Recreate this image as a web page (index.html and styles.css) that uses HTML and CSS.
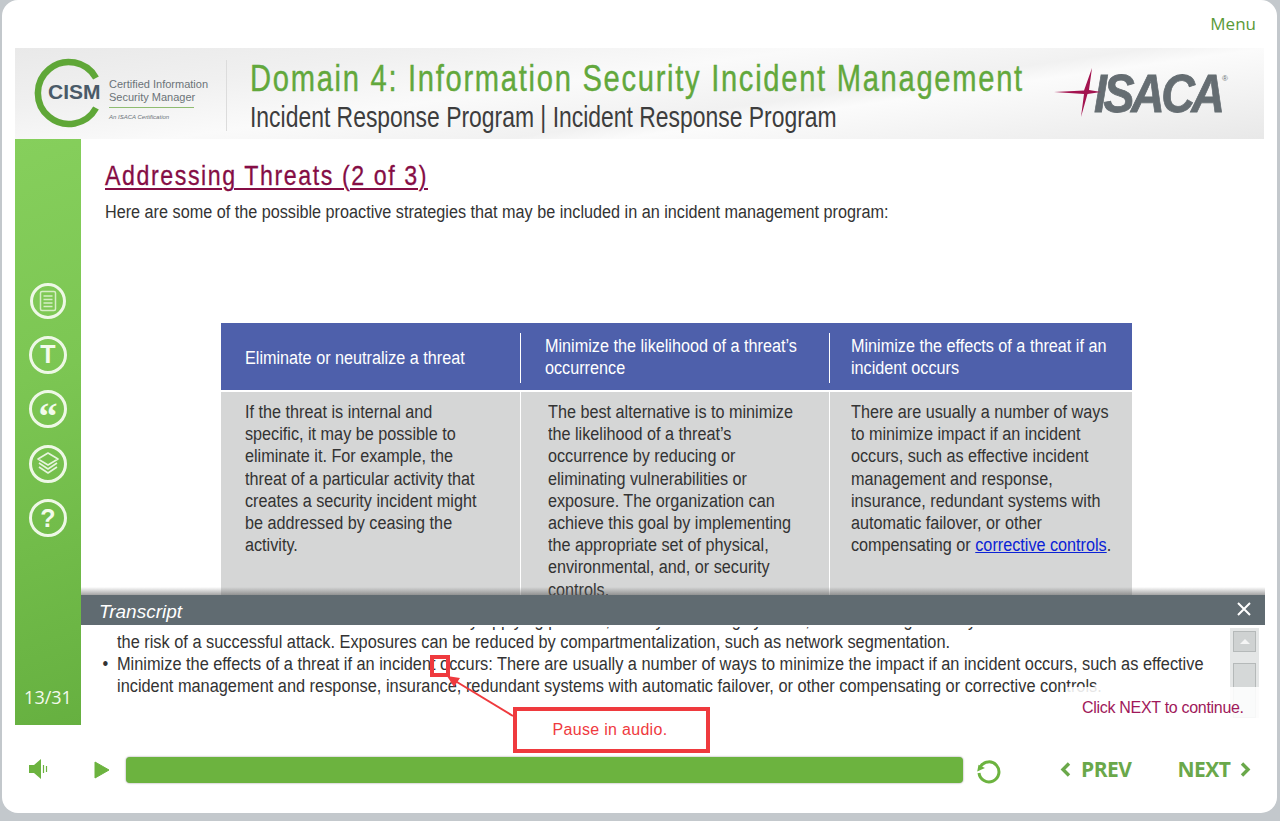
FILE: index.html
```html
<!DOCTYPE html>
<html lang="en">
<head>
  <meta charset="UTF-8">
  <title>Addressing Threats (2 of 3)</title>
  <link rel="stylesheet" href="styles.css">
</head>
<body>

<div class="player">
  <div class="topbar"><a class="menu-link">Menu</a></div>

  <header class="banner">
    <div class="cism">
      <svg class="cism-ring" width="72" height="72" viewBox="0 0 72 72">
        <path d="M63 21 A31 31 0 1 0 63 51" fill="none" stroke="#5fa737" stroke-width="6.5"/>
      </svg>
      <span class="cism-word">CISM</span>
      <div class="cism-text">
        <span>Certified Information</span>
        <span>Security Manager</span>
        <i class="cism-rule"></i>
        <small>An ISACA Certification</small>
      </div>
    </div>
    <div class="titles">
      <h1>Domain 4: Information Security Incident Management</h1>
      <h2>Incident Response Program | Incident Response Program</h2>
    </div>
    <div class="isaca">
      <span class="isaca-word">ISACA</span>
      <svg class="isaca-star" width="64" height="50" viewBox="0 0 64 50">
        <path d="M0 24 L30 22.5 L38 0 L35 22 L47 24 L33.5 26 L27 49 L30 26 Z" fill="#a3134f"/>
      </svg>
      <span class="isaca-reg">®</span>
    </div>
  </header>

  <div class="middle">
    <aside class="sidebar">
      <div class="side-icons">
        <span class="side-btn small">
          <svg width="18" height="22" viewBox="0 0 18 22" fill="none" stroke="#d6eec6" stroke-width="1.5">
            <rect x="1.5" y="1.5" width="15" height="19" rx="1.5"/>
            <path d="M4.5 6h9M4.5 9.5h9M4.5 13h9M4.5 16.5h9"/>
          </svg>
        </span>
        <span class="side-btn"><b>T</b></span>
        <span class="side-btn"><b class="quote">“</b></span>
        <span class="side-btn">
          <svg width="24" height="26" viewBox="0 0 24 26" fill="none" stroke="#e6f5dc" stroke-width="1.6" stroke-linejoin="round">
            <path d="M12 2 L22 8 L12 14 L2 8 Z"/>
            <path d="M3 12 L12 18 L21 12"/>
            <path d="M3 16 L12 22 L21 16"/>
          </svg>
        </span>
        <span class="side-btn"><b>?</b></span>
      </div>
      <div class="page-count">13/31</div>
    </aside>

    <main class="content">
      <h3 class="slide-title">Addressing Threats (2 of 3)</h3>
      <p class="intro squeeze">Here are some of the possible proactive strategies that may be included in an incident management program:</p>

      <div class="strategies">
        <div class="st-head first"><div class="squeeze">Eliminate or neutralize a threat</div></div>
        <div class="st-head second"><div class="squeeze">Minimize the likelihood of a threat’s<br>occurrence</div></div>
        <div class="st-head third"><div class="squeeze">Minimize the effects of a threat if an<br>incident occurs</div></div>

        <div class="st-cell first"><div class="squeeze">If the threat is internal and<br>specific, it may be possible to<br>eliminate it. For example, the<br>threat of a particular activity that<br>creates a security incident might<br>be addressed by ceasing the<br>activity.</div></div>
        <div class="st-cell second"><div class="squeeze">The best alternative is to minimize<br>the likelihood of a threat’s<br>occurrence by reducing or<br>eliminating vulnerabilities or<br>exposure. The organization can<br>achieve this goal by implementing<br>the appropriate set of physical,<br>environmental, and, or security<br>controls.</div></div>
        <div class="st-cell third"><div class="squeeze">There are usually a number of ways<br>to minimize impact if an incident<br>occurs, such as effective incident<br>management and response,<br>insurance, redundant systems with<br>automatic failover, or other<br>compensating or <a class="st-link">corrective controls</a>.</div></div>
      </div>
    </main>

    <section class="transcript">
      <div class="transcript-bar">
        <span class="transcript-title">Transcript</span>
        <svg width="14" height="14" viewBox="0 0 14 14" stroke="#fff" stroke-width="2"><path d="M1 1 L13 13 M13 1 L1 13"/></svg>
      </div>
      <div class="transcript-body">
        <ul class="squeeze">
          <li>Minimize the likelihood of a threat’s occurrence by applying patches, and by hardening systems, which can significantly reduce<br>the risk of a successful attack. Exposures can be reduced by compartmentalization, such as network segmentation.</li>
          <li>Minimize the effects of a threat if an incident occurs: There are usually a number of ways to minimize the impact if an incident occurs, such as effective<br>incident management and response, insurance, redundant systems with automatic failover, or other compensating or corrective controls.</li>
        </ul>
        <div class="scrollbar">
          <span class="scroll-btn"><i></i></span>
          <span class="scroll-thumb"></span>
        </div>
      </div>
    </section>

    <div class="next-hint">Click NEXT to continue.</div>

    <svg class="callout-arrow" width="100" height="70" viewBox="0 0 100 70">
      <path d="M77 48 L16 11" stroke="#ef3a3e" stroke-width="2" fill="none"/>
      <path d="M11 8 L24 10 L18 19 Z" fill="#ef3a3e"/>
    </svg>
    <span class="callout-mark"></span>
    <div class="callout-box">Pause in audio.</div>
  </div>

  <footer class="controls">
    <svg class="ic-audio" width="22" height="22" viewBox="0 0 22 22">
      <path d="M1 7h5l7-6v20l-7-6H1z" fill="#6cb33f"/>
      <path d="M15.5 7v8M18.5 8v6" stroke="#6cb33f" stroke-width="1.2"/>
    </svg>
    <svg class="ic-play" width="16" height="18" viewBox="0 0 16 18"><path d="M1 1 L15 9 L1 17 Z" fill="#6cb33f" stroke="#6cb33f" stroke-linejoin="round"/></svg>
    <div class="progress"></div>
    <svg class="ic-replay" width="26" height="26" viewBox="0 0 26 26" fill="none">
      <path d="M5.5 8.5 A10 10 0 1 1 4 15" stroke="#6cb33f" stroke-width="3"/>
      <path d="M1 12 L9.5 12 L5 6.5 Z" fill="#6cb33f" transform="rotate(-25 5 10)"/>
    </svg>
    <a class="nav-btn prev">
      <svg width="11" height="15" viewBox="0 0 11 15"><path d="M9 1.5 L3 7.5 L9 13.5" fill="none" stroke="#6aa84a" stroke-width="3.4"/></svg>
      PREV
    </a>
    <a class="nav-btn next">
      NEXT
      <svg width="11" height="15" viewBox="0 0 11 15"><path d="M2 1.5 L8 7.5 L2 13.5" fill="none" stroke="#6aa84a" stroke-width="3.4"/></svg>
    </a>
  </footer>
</div>

</body>
</html>
```

FILE: styles.css
```css
html, body { margin: 0; height: 100%; }
body { background: #c3c8cc; overflow: hidden; font-family: "Liberation Sans", sans-serif; color: #333; }

/* the slide font is a narrow one, none is installed so squeeze the regular one */
.squeeze { transform: scaleX(.9); transform-origin: 0 0; white-space: nowrap; }

.player { width: 1275px; height: 813px; margin-left: 2px; background: #fff; border-radius: 16px; display: flex; flex-direction: column; padding: 0 13px 0 13px; box-sizing: border-box; position: relative; }

.topbar { height: 48px; display: flex; justify-content: flex-end; }
.menu-link { font: 17px "Open Sans", sans-serif; color: #5a9a38; margin: 13px 8px 0 0; line-height: 22px; }

/* header band */
.banner { height: 91px; display: flex; width: 1249px; background: linear-gradient(172deg, #e9e9e9 0%, #f0f0f0 22%, #fafafa 42%, #f1f1f1 60%, #fbfbfb 66%, #e8e8e8 100%); }
.cism { width: 211px; position: relative; border-right: 1px solid #dcdcdc; margin: 12px 0 8px; flex-shrink: 0; }
.cism-ring { position: absolute; left: 18px; top: -3px; }
.cism-word { position: absolute; left: 33px; top: 20px; font: bold 21px/24px "Liberation Sans", sans-serif; color: #4a5a68; }
.cism-text { position: absolute; left: 94px; top: 18px; display: flex; flex-direction: column; font-size: 11px; line-height: 13px; color: #6b7378; white-space: nowrap; }
.cism-rule { height: 1px; width: 85px; background: #8fbc70; margin: 3px 0 6px; }
.cism-text small { font-size: 6px; line-height: 6px; font-style: italic; }
.titles { padding: 12px 0 0 23px; width: 800px; flex-shrink: 0; white-space: nowrap; box-sizing: border-box; }
.titles h1 { margin: 0; font-size: 36px; line-height: 37px; font-weight: normal; color: #62a83c; letter-spacing: 2.1px; transform: scaleX(.81); transform-origin: 0 0; -webkit-text-stroke: .4px #62a83c; }
.titles h2 { margin: 2px 0 0; font-size: 29px; line-height: 36px; font-weight: normal; color: #3d3d3d; transform: scaleX(.79); transform-origin: 0 0; }
.isaca { position: relative; flex: 1; }
.isaca-star { position: absolute; left: 27px; top: 20px; }
.isaca-word { position: absolute; left: 67px; top: 17px; font: italic bold 53px/58px "Liberation Sans", sans-serif; color: #656d72; letter-spacing: -4px; transform: scaleX(.88); transform-origin: 0 0; -webkit-text-stroke: .8px #656d72; }
.isaca-reg { position: absolute; left: 195px; top: 26px; font-size: 8px; line-height: 10px; color: #6a7276; }

/* middle */
.middle { height: 586px; display: flex; width: 1250px; }
.sidebar { width: 66px; flex-shrink: 0; background: linear-gradient(160deg, #86cf5c 0%, #7cc653 40%, #71bb49 70%, #66b040 100%); display: flex; flex-direction: column; justify-content: space-between; }
.side-icons { display: flex; flex-direction: column; align-items: center; gap: 16.5px; padding-top: 144px; }
.side-btn { width: 32px; height: 32px; border: 3px solid #eef8e6; border-radius: 50%; display: flex; align-items: center; justify-content: center; color: #f3fbec; font: bold 25px/1 "Liberation Sans", sans-serif; }
.side-btn.small { width: 30px; height: 30px; }
.side-btn .quote { font-size: 38px; line-height: 38px; margin-top: 14px; font-family: "Liberation Serif", serif; }
.page-count { font: 18px/22px "Open Sans", sans-serif; color: #f4faee; text-align: center; padding-bottom: 17px; }

.content { flex: 1; padding: 21px 0 0 24px; overflow: hidden; height: 565px; }
.slide-title { margin: 0; font-size: 28px; line-height: 32px; font-weight: normal; color: #850d45; letter-spacing: 1.9px; text-decoration: underline; text-decoration-thickness: 2px; text-underline-offset: 3px; white-space: nowrap; transform: scaleX(.828); transform-origin: 0 0; -webkit-text-stroke: .3px #850d45; }
.intro { margin: 9px 0 0; font-size: 18px; line-height: 22px; color: #333; }

.strategies { margin: 100px 0 0 116px; width: 911px; display: grid; grid-template-columns: 299px 309px 303px; font-size: 18px; line-height: 22px; }
.st-head { background: #4e60ab; color: #fff; height: 68px; padding: 12px 0 0; box-sizing: border-box; position: relative; border-bottom: 1px solid #fff; }
.st-head.first { display: flex; align-items: center; padding: 2px 0 0 24px; }
.st-head.second { padding-left: 25px; }
.st-head.third { padding-left: 22px; }
.st-head + .st-head::before { content: ""; position: absolute; left: 0; top: 10px; bottom: 7px; width: 1px; background: #fff; }
.st-cell { background: #d5d6d6; color: #333; padding-top: 9px; height: 220px; box-sizing: border-box; border-left: 1px solid #fff; margin-top: 1px; line-height: 22.2px; }
.st-cell.first { padding-left: 24px; border-left: 0; }
.st-cell.second { padding-left: 27px; }
.st-cell.third { padding-left: 21px; }
.st-link { color: #0b22d6; text-decoration: underline; }

/* transcript panel over the slide */
.transcript { position: absolute; left: 79px; top: 595px; width: 1184px; }
.transcript::before { content: ""; position: absolute; left: 0; right: 0; top: -8px; height: 8px; background: linear-gradient(rgba(90,90,90,0), rgba(90,90,90,.55)); }
.transcript-bar { height: 30px; background: #606b71; display: flex; align-items: center; justify-content: space-between; padding: 4px 14px 0 18px; box-sizing: border-box; }
.transcript-bar svg { margin-top: -6px; }
.transcript-title { font: italic 19px "Liberation Sans", sans-serif; color: #fff; }
.transcript-body { position: relative; height: 96px; overflow: hidden; background: #fff; }
/* text scrolls under a small white gap below the bar */
.transcript-body::before { content: ""; position: absolute; left: 0; right: 0; top: 0; height: 2px; background: #fff; z-index: 1; }
.transcript-body ul { margin: -16px 0 0 36px; padding: 0; list-style: none; font-size: 18px; line-height: 22px; color: #333; transform: scaleX(.908); }
.transcript-body li { position: relative; }
.transcript-body li::before { content: "•"; position: absolute; left: -16px; }
.scrollbar { position: absolute; left: 1149px; top: 3px; width: 29px; height: 90px; background: #e4e6e6; display: flex; flex-direction: column; align-items: center; gap: 11px; padding-top: 3px; box-sizing: border-box; }
.scroll-btn { width: 23px; height: 23px; background: #cfd2d2; border: 1px solid #b5b9b9; box-sizing: border-box; display: flex; align-items: center; justify-content: center; }
.scroll-btn i { border: 5px solid transparent; border-bottom: 5px solid #f5f5f5; border-top: 0; }
.scroll-thumb { width: 23px; height: 60px; background: #d5d8d8; border: 1px solid #b5b9b9; box-sizing: border-box; }

.next-hint { position: absolute; left: 1065px; top: 687px; width: 194px; height: 31px; padding: 11px 0 0 15px; box-sizing: border-box; background: rgba(255,255,255,.88); font: 16px/20px "Liberation Sans", sans-serif; letter-spacing: -.3px; color: #a0185a; white-space: nowrap; }

/* audio callout */
.callout-arrow { position: absolute; left: 434px; top: 668px; }
.callout-mark { position: absolute; left: 428px; top: 655px; width: 20px; height: 22px; border: 4px solid #ef3a3e; box-sizing: border-box; }
.callout-box { position: absolute; left: 511px; top: 707px; width: 197px; height: 46px; border: 4px solid #ef3a3e; box-sizing: border-box; background: #fff; color: #ef3a3e; font: 16px/38px "Liberation Sans", sans-serif; letter-spacing: .3px; text-align: center; text-indent: -3px; }

/* bottom controls */
.controls { flex: 1; display: flex; align-items: flex-start; position: relative; padding-top: 32px; }
.ic-audio { margin: 1px 0 0 13px; flex-shrink: 0; }
.ic-play { margin: 4px 0 0 44px; flex-shrink: 0; }
.progress { width: 837px; height: 26px; margin-left: 16px; background: #6cb33f; border-radius: 4px; box-shadow: 0 0 2px #888; flex-shrink: 0; }
.ic-replay { margin: 1px 0 0 12px; flex-shrink: 0; }
.nav-btn { display: flex; align-items: center; gap: 10px; font: bold 21px/24px "Open Sans", sans-serif; letter-spacing: -.5px; color: #6aa84a; }
.nav-btn.prev { margin-left: 59px; }
.nav-btn.next { margin-left: 46px; }
```
